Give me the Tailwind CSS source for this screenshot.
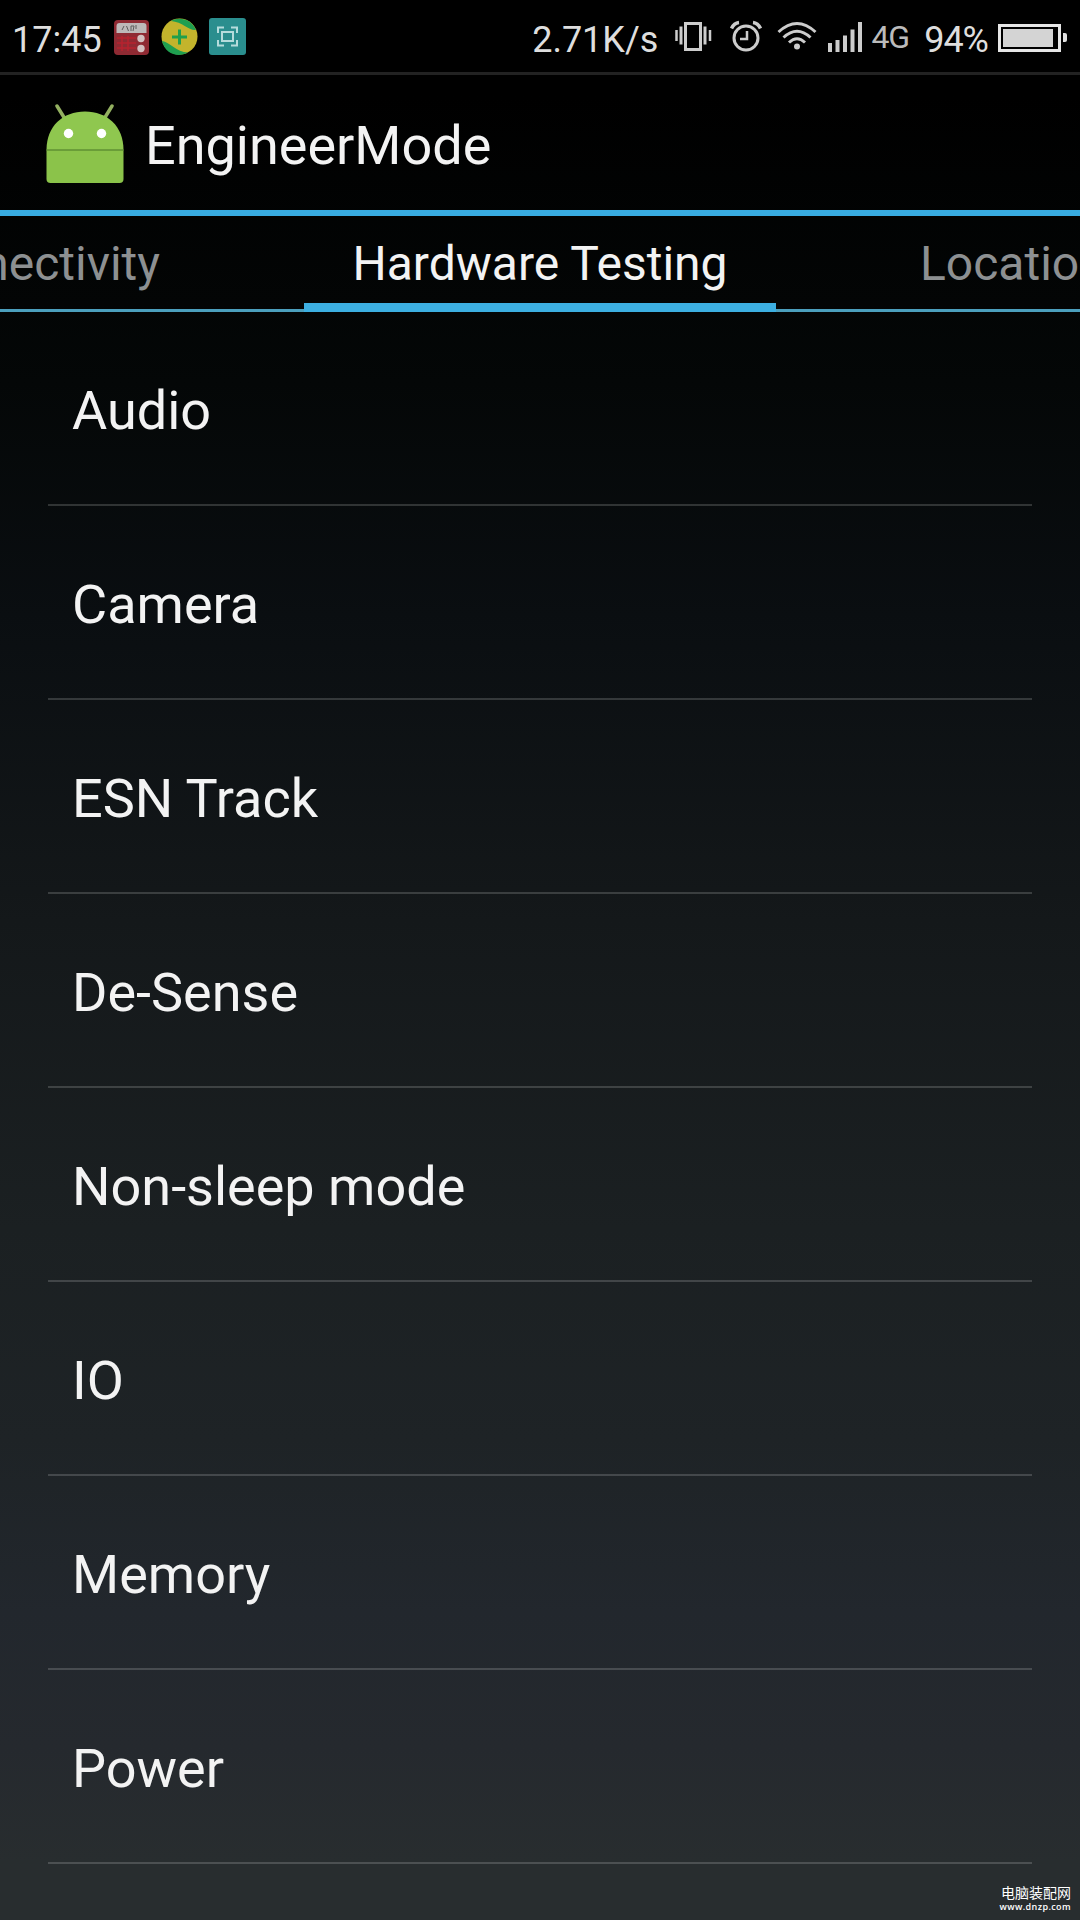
<!DOCTYPE html>
<html lang="en">

<head>
    <meta charset="UTF-8">
    <meta name="viewport" content="width=device-width, initial-scale=1.0">
    <title>EngineerMode</title>
    <script src="https://cdn.jsdelivr.net/npm/@tailwindcss/browser@4"></script>
</head>

<body class="bg-black">
    <div class="relative flex flex-col w-[1080px] h-[1920px] overflow-hidden bg-[linear-gradient(to_bottom,#000000_5%,#040707_20%,#0a0e11_32%,#14181a_48%,#1b2022_64%,#1e2326_75%,#22272d_84%,#25292e_91%,#282d2f_97%)] text-[#f3f3f3] font-[Roboto,sans-serif]">
        <!-- Status bar -->
        <header class="flex items-center h-[75px] shrink-0 pl-[12px] pr-[12px] border-b-3 border-[#222222] bg-black text-[36px] leading-none text-[#dedede]">
            <span class="mt-[8px]">17:45</span>
            <!-- Radio -->
            <svg class="ml-[12px] mt-[2px]" width="35" height="35" viewBox="0 0 35 35">
                <rect width="35" height="35" rx="4" fill="#8f2a33" />
                <path d="M2.500 13V6a3 3 0 0 1 3-3h24a3 3 0 0 1 3 3v7z" fill="#bdb9b9" />
                <path d="M8 10l2-4M12.500 6l2 5M17 6v5M17 6h3l-1 5M22 5v4" stroke="#5c5c5c" stroke-width="1" fill="none" />
                <path d="M3 18h19M3 23h19M3 28h19M8 16v15M14 16v15" stroke="#b8232f" stroke-width="1.500" />
                <circle cx="27" cy="18.500" r="3.700" fill="#d3c0c0" />
                <circle cx="27" cy="28.500" r="3.700" fill="#d3c0c0" />
            </svg>
            <!-- Security ball -->
            <svg class="ml-[12px] mt-[1px]" width="37" height="37" viewBox="0 0 37 37">
                <circle cx="18.500" cy="18.500" r="18" fill="#c3b42c" />
                <path d="M10 3C18-2 31 1 35 12C28 13 22 4 10 3z" fill="#1f9f50" />
                <path d="M1 23C9 24 15 34 27 34.500C17 40 4 36 1 23z" fill="#1f9f50" />
                <path d="M18.500 11.500v15M11 19h15" stroke="#1f9f4c" stroke-width="3" />
            </svg>
            <!-- Screenshot -->
            <svg class="ml-[11px] mt-[1px]" width="37" height="37" viewBox="0 0 37 37">
                <rect width="37" height="37" rx="3" fill="#2a8e8e" />
                <g fill="none" stroke="#b5dcdc" stroke-width="2">
                    <path d="M9 15V9.500h6M22 9.500h6V15M28 22v5.500h-6M15 27.500H9V22" />
                    <rect x="13" y="14" width="11" height="9" />
                </g>
            </svg>

            <span class="ml-auto mt-[8px]">2.71K/s</span>
            <!-- Vibrate -->
            <svg class="ml-[16px]" width="38" height="30" viewBox="0 0 38 30" fill="none" stroke="#cccccc">
                <rect x="11.500" y="2.500" width="15" height="26" stroke-width="3" />
                <path d="M7 5.500v18M31 5.500v18" stroke-width="3" />
                <path d="M2.500 9v11M36 9v11" stroke-width="2.500" />
            </svg>
            <!-- Alarm -->
            <svg class="ml-[18px]" width="32" height="32" viewBox="0 0 32 32" fill="none" stroke="#cccccc">
                <circle cx="16" cy="18" r="12" stroke-width="3" />
                <path d="M17 11v8h-7" stroke-width="2.500" />
                <path d="M1.500 8.500Q4 3 9 2.500M30.500 8.500Q28 3 23 2.500" stroke-width="3.500" />
            </svg>
            <!-- Wifi -->
            <svg class="ml-[15px]" width="40" height="30" viewBox="0 0 40 30" fill="none" stroke="#cccccc" stroke-width="3">
                <path d="M1.500 11Q20-6 38.500 11" />
                <path d="M6.500 16.500Q20 4 33.500 16.500" />
                <path d="M12 21.500Q20 14 28 21.500" />
                <circle cx="20" cy="25.500" r="3" fill="#cccccc" stroke="none" />
            </svg>
            <!-- Signal -->
            <svg class="ml-[11px] mt-[2px]" width="34" height="30" viewBox="0 0 34 30" fill="#cccccc">
                <path d="M0 21h4v9h-4zM7.500 18h4v12h-4zM15 13.500h4v16.500h-4zM22.500 7.500h4v22.500h-4zM30 0h4v30h-4z" />
            </svg>
            <span class="ml-[9px] mt-[2px] text-[32px] text-[#bbbbbb] tracking-[-1px]">4G</span>
            <span class="ml-[15px] mt-[8px] tracking-[-1px]">94%</span>
            <!-- Battery -->
            <svg class="ml-[10px] mt-[3px]" width="70" height="28" viewBox="0 0 70 28">
                <rect x="1.500" y="1.500" width="60" height="25" fill="none" stroke="#e6e6e6" stroke-width="3" />
                <rect x="5" y="5" width="50" height="18" fill="#d4d4d4" />
                <path d="M65 9h2q2 0 2 2v5q0 2-2 2h-2z" fill="#e0e0e0" />
            </svg>
        </header>

        <!-- Action bar -->
        <div class="flex items-center h-[141px] shrink-0 pl-[46px] border-b-6 border-[#38abe0]">
            <svg class="mt-[2px]" width="78" height="80" viewBox="0 0 78 80">
                <path d="M11 2l8 13M66 2l-8 13" stroke="#93b060" stroke-width="3.500" stroke-linecap="round" />
                <path d="M0.500 46C0.500 22 17 7.500 39 7.500S77.500 22 77.500 46z" fill="#8fc74f" />
                <path d="M0.500 46h77v29q0 4-4 4h-69q-4 0-4-4z" fill="#8bc34a" />
                <path d="M0.500 46h77" stroke="#5f9133" stroke-width="1.500" />
                <circle cx="22.500" cy="29.500" r="4.700" fill="#ffffff" />
                <circle cx="55.500" cy="29.500" r="4.700" fill="#ffffff" />
            </svg>
            <h1 class="ml-[21px] mt-[7px] text-[54px] leading-none">EngineerMode</h1>
        </div>

        <!-- Tabs -->
        <nav class="relative flex justify-center h-24 shrink-0 border-b-3 border-[#4b9fbd] text-[48px] leading-[96px] whitespace-nowrap text-[#8d9092]">
            <span class="absolute top-0 right-[920px]">Connectivity</span>
            <span class="relative w-[472px] h-24 border-b-9 border-[#3cafe1] text-center text-[#f3f3f3]">Hardware Testing</span>
            <span class="absolute top-0 left-[920px]">Location</span>
        </nav>

        <!-- Test list -->
        <ul class="px-12 text-[54px] leading-[197px]">
            <li class="h-[194px] pl-[24px] border-b-2 border-white/17">Audio</li>
            <li class="h-[194px] pl-[24px] border-b-2 border-white/17">Camera</li>
            <li class="h-[194px] pl-[24px] border-b-2 border-white/17">ESN Track</li>
            <li class="h-[194px] pl-[24px] border-b-2 border-white/17">De-Sense</li>
            <li class="h-[194px] pl-[24px] border-b-2 border-white/17">Non-sleep mode</li>
            <li class="h-[194px] pl-[24px] border-b-2 border-white/17">IO</li>
            <li class="h-[194px] pl-[24px] border-b-2 border-white/17">Memory</li>
            <li class="h-[194px] pl-[24px] border-b-2 border-white/17">Power</li>
        </ul>

        <!-- Site mark -->
        <div class="absolute right-[9px] bottom-[7px] flex flex-col items-end text-white">
            <span class="text-[14px] leading-[17px] font-['Noto_Sans_CJK_SC',sans-serif]">电脑装配网</span>
            <span class="text-[9px] leading-[12px] tracking-[0.4px] font-['Open_Sans',sans-serif] font-semibold">www.dnzp.com</span>
        </div>
    </div>
</body>

</html>
